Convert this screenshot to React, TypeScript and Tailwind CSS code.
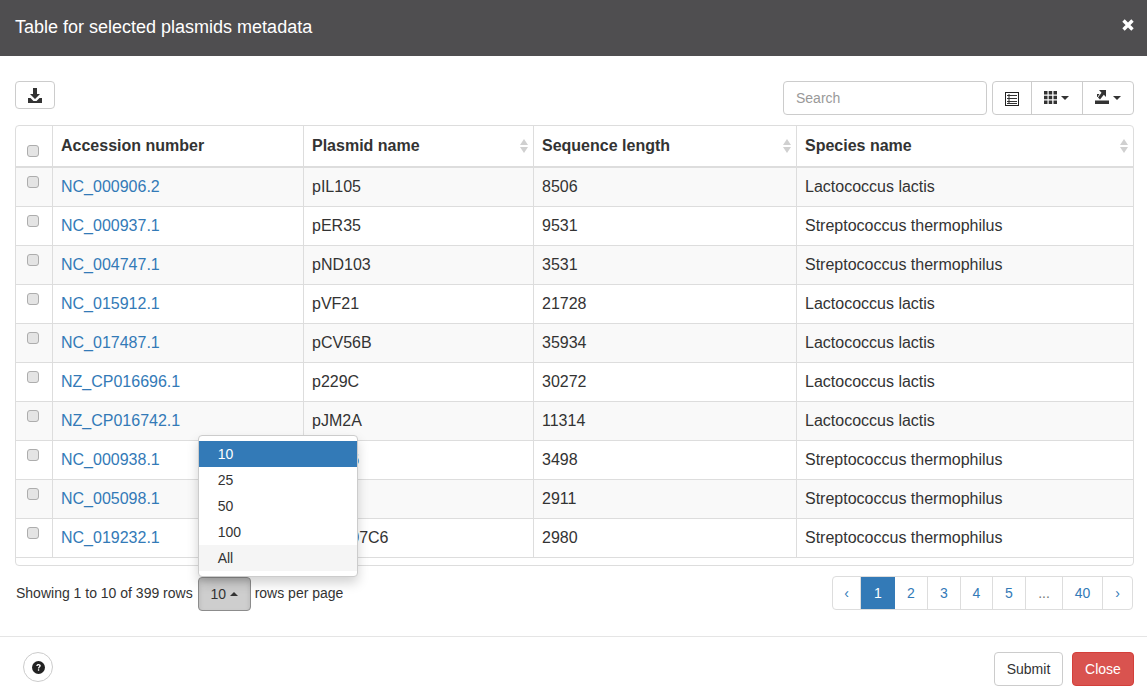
const rows = [
  ['NC_000906.2', 'pIL105', '8506', 'Lactococcus lactis'],
  ['NC_000937.1', 'pER35', '9531', 'Streptococcus thermophilus'],
  ['NC_004747.1', 'pND103', '3531', 'Streptococcus thermophilus'],
  ['NC_015912.1', 'pVF21', '21728', 'Lactococcus lactis'],
  ['NC_017487.1', 'pCV56B', '35934', 'Lactococcus lactis'],
  ['NZ_CP016696.1', 'p229C', '30272', 'Lactococcus lactis'],
  ['NZ_CP016742.1', 'pJM2A', '11314', 'Lactococcus lactis'],
  ['NC_000938.1', 'pST06', '3498', 'Streptococcus thermophilus'],
  ['NC_005098.1', 'p53', '2911', 'Streptococcus thermophilus'],
  ['NC_019232.1', 'pST007C6', '2980', 'Streptococcus thermophilus'],
];

const Checkbox = ({ className }: { className: string }) => (
  <span className={`block w-[12px] h-[12px] rounded-[3px] border border-[#adadad] bg-[#e4e4e4] ${className}`} />
);

const SortArrows = () => (
  <svg width="10" height="16" viewBox="0 0 10 16" className="absolute right-[4px] top-[12px]">
    <path d="M5 1 L9 7 H1 Z M1 9 H9 L5 15 Z" fill="#d0d0d0" />
  </svg>
);

const Caret = ({ up }: { up?: boolean }) => (
  <svg width="8" height="4" viewBox="0 0 8 4" className="ml-[4px]">
    <path d={up ? 'M0 4 L4 0 L8 4 Z' : 'M0 0 H8 L4 4 Z'} fill="#333" />
  </svg>
);

export default function App() {
  return (
    <div className="w-[1147px] h-[700px] bg-white overflow-hidden text-[#333] font-['Liberation_Sans',Arial,sans-serif] flex flex-col">
      <div className="h-[56px] shrink-0 bg-[#4f4e50] text-white pl-[15px] pr-[13px] pb-[2px] flex items-center justify-between">
        <span className="text-[18px]">Table for selected plasmids metadata</span>
        <svg width="12" height="12" viewBox="0 0 12 12" className="-mt-[4px]">
          <path d="M1.5 1.5 L10.5 10.5 M10.5 1.5 L1.5 10.5" stroke="#fff" strokeWidth="3.4" />
        </svg>
      </div>

      <div className="h-[580px] shrink-0 pl-[15px] pr-[13px] pt-[25px] relative">
        <div className="flex items-start">
          <button className="w-[40px] h-[28px] border border-[#ccc] rounded-[4px] flex items-center justify-center">
            <svg width="14" height="15" viewBox="0 0 14 15">
              <path d="M5 0 H9 V6 H12 L7 11 L2 6 H5 Z M0 10 H2.5 L5.5 13 H8.5 L11.5 10 H14 V15 H0 Z" fill="#333" />
            </svg>
          </button>
          <input
            placeholder="Search"
            className="ml-auto w-[204px] h-[34px] border border-[#ccc] rounded-[4px] px-[12px] text-[14px] placeholder:text-[#999] outline-none"
          />
          <div className="ml-[5px] flex h-[34px] border border-[#ccc] rounded-[4px]">
            <div className="w-[39px] flex items-center justify-center border-r border-[#ccc]">
              <svg width="14" height="14" viewBox="0 0 14 14" className="mt-[2px]">
                <path fillRule="evenodd" d="M0 0 H14 V14 H0 Z M1 1 V13 H13 V1 Z" fill="#222" />
                <path d="M2 3.5 H12 M2 6.5 H12 M2 9.5 H12 M2 11.5 H12" stroke="#333" />
                <path d="M4 2 V12" stroke="#333" />
              </svg>
            </div>
            <div className="w-[51px] pr-[1px] flex items-center justify-center border-r border-[#ccc]">
              <svg width="13" height="13" viewBox="0 0 13 13" className="-mt-[1px]">
                <path d="M0 0 H3.5 V3.5 H0 Z M4.7 0 H8.2 V3.5 H4.7 Z M9.5 0 H13 V3.5 H9.5 Z M0 4.7 H3.5 V8.2 H0 Z M4.7 4.7 H8.2 V8.2 H4.7 Z M9.5 4.7 H13 V8.2 H9.5 Z M0 9.5 H3.5 V13 H0 Z M4.7 9.5 H8.2 V13 H4.7 Z M9.5 9.5 H13 V13 H9.5 Z" fill="#333" />
              </svg>
              <Caret />
            </div>
            <div className="w-[50px] flex items-center justify-center">
              <svg width="14" height="14" viewBox="0 0 14 14" className="-mt-[2px]">
                <path d="M0 10.5 H14 V14 H0 Z M4 0 H11 V7 L8.8 4.8 L5 9.5 L3 7.5 L6.5 2.8 Z M2 4 H4.5 L2.5 7 H2 Z" fill="#333" />
              </svg>
              <Caret />
            </div>
          </div>
        </div>

        <div className="mt-[10px] h-[441px] border border-[#ddd] rounded-[4px]">
          <table className="w-full border-separate border-spacing-0 table-fixed text-[16px]">
            <colgroup>
              <col className="w-[37px]" />
              <col className="w-[251px]" />
              <col className="w-[230px]" />
              <col className="w-[263px]" />
              <col />
            </colgroup>
            <thead>
              <tr>
                <th className="h-[42px] border-b-2 border-r border-[#ddd] p-0 align-top">
                  <Checkbox className="ml-[11px] mt-[19px]" />
                </th>
                {['Accession number', 'Plasmid name', 'Sequence length', 'Species name'].map((h, i) => (
                  <th key={h} className={`relative h-[42px] border-b-2 border-[#ddd] px-[8px] text-left font-bold ${i < 3 ? 'border-r' : ''}`}>
                    {h}
                    {i > 0 && <SortArrows />}
                  </th>
                ))}
              </tr>
            </thead>
            <tbody>
              {rows.map((row, r) => (
                <tr key={row[0]} className={r % 2 === 0 ? 'bg-[#f9f9f9]' : ''}>
                  <td className="h-[39px] border-b border-r border-[#ddd] p-0 align-top">
                    <Checkbox className="ml-[11px] mt-[8px]" />
                  </td>
                  <td className="border-b border-r border-[#ddd] px-[8px]">
                    <a className="text-[#337ab7]">{row[0]}</a>
                  </td>
                  <td className="border-b border-r border-[#ddd] px-[8px]">{row[1]}</td>
                  <td className="border-b border-r border-[#ddd] px-[8px]">{row[2]}</td>
                  <td className="border-b border-[#ddd] px-[8px]">{row[3]}</td>
                </tr>
              ))}
            </tbody>
          </table>
        </div>

        <div className="mt-[10px] flex items-start pl-[1px] pr-[1px] text-[14px]">
          <div className="flex items-center h-[34px]">
            <span>Showing 1 to 10 of 399 rows</span>
            <span className="relative ml-[5px] mt-[2px]">
              <button className="w-[53px] h-[34px] bg-[#cecece] border border-[#8c8c8c] rounded-[4px] shadow-[inset_0_3px_5px_rgba(0,0,0,0.125)] flex items-center justify-center">
                10
                <Caret up />
              </button>
              <div className="absolute left-0 bottom-[34px] w-[160px] py-[5px] bg-white border border-[#ccc] rounded-[4px] shadow-[0_6px_12px_rgba(0,0,0,0.175)] z-10">
                {['10', '25', '50', '100', 'All'].map((o, i) => (
                  <div key={o} className={`h-[26px] pl-[19px] flex items-center ${i === 0 ? 'bg-[#337ab7] text-white' : i === 4 ? 'bg-[#f5f5f5]' : ''}`}>
                    {o}
                  </div>
                ))}
              </div>
            </span>
            <span className="ml-[4px]">rows per page</span>
          </div>
          <div className="ml-auto flex h-[34px] border border-[#ddd] rounded-[4px] text-[#337ab7]">
            {[
              ['‹', 'w-[28px]'],
              ['1', 'w-[34px]'],
              ['2', 'w-[33px]'],
              ['3', 'w-[33px]'],
              ['4', 'w-[32px]'],
              ['5', 'w-[33px]'],
              ['...', 'w-[37px]'],
              ['40', 'w-[40px]'],
              ['›', 'w-[29px]'],
            ].map(([label, w], i) => (
              <div
                key={label}
                className={`${w} flex items-center justify-center ${i === 1 ? 'bg-[#337ab7] text-white' : i < 8 ? 'border-r border-[#ddd]' : ''} ${label === '...' ? 'text-[#777]' : ''}`}
              >
                {label}
              </div>
            ))}
          </div>
        </div>
      </div>

      <div className="flex-1 border-t border-[#e5e5e5] pt-[15px] pr-[13px] pl-[23px] flex items-start text-[14px]">
        <button className="w-[30px] h-[30px] rounded-full border border-[#ccc] flex items-center justify-center">
          <svg width="13" height="13" viewBox="0 0 13 13">
            <circle cx="6.5" cy="6.5" r="6.5" fill="#222" />
            <path d="M4.3 5 C4.4 3.6 5.4 3 6.6 3 C7.9 3 8.8 3.8 8.8 4.8 C8.8 6.2 7.2 6.2 7.2 7.5 H5.9 C5.9 5.7 7.3 5.7 7.3 4.9 C7.3 4.5 7 4.2 6.5 4.2 C6 4.2 5.7 4.5 5.6 5 Z M5.9 8.3 H7.2 V9.8 H5.9 Z" fill="#fff" />
          </svg>
        </button>
        <button className="ml-auto w-[69px] h-[34px] bg-white border border-[#ccc] rounded-[4px]">Submit</button>
        <button className="ml-[9px] w-[62px] h-[34px] bg-[#d9534f] border border-[#d43f3a] text-white rounded-[4px]">Close</button>
      </div>
    </div>
  );
}
